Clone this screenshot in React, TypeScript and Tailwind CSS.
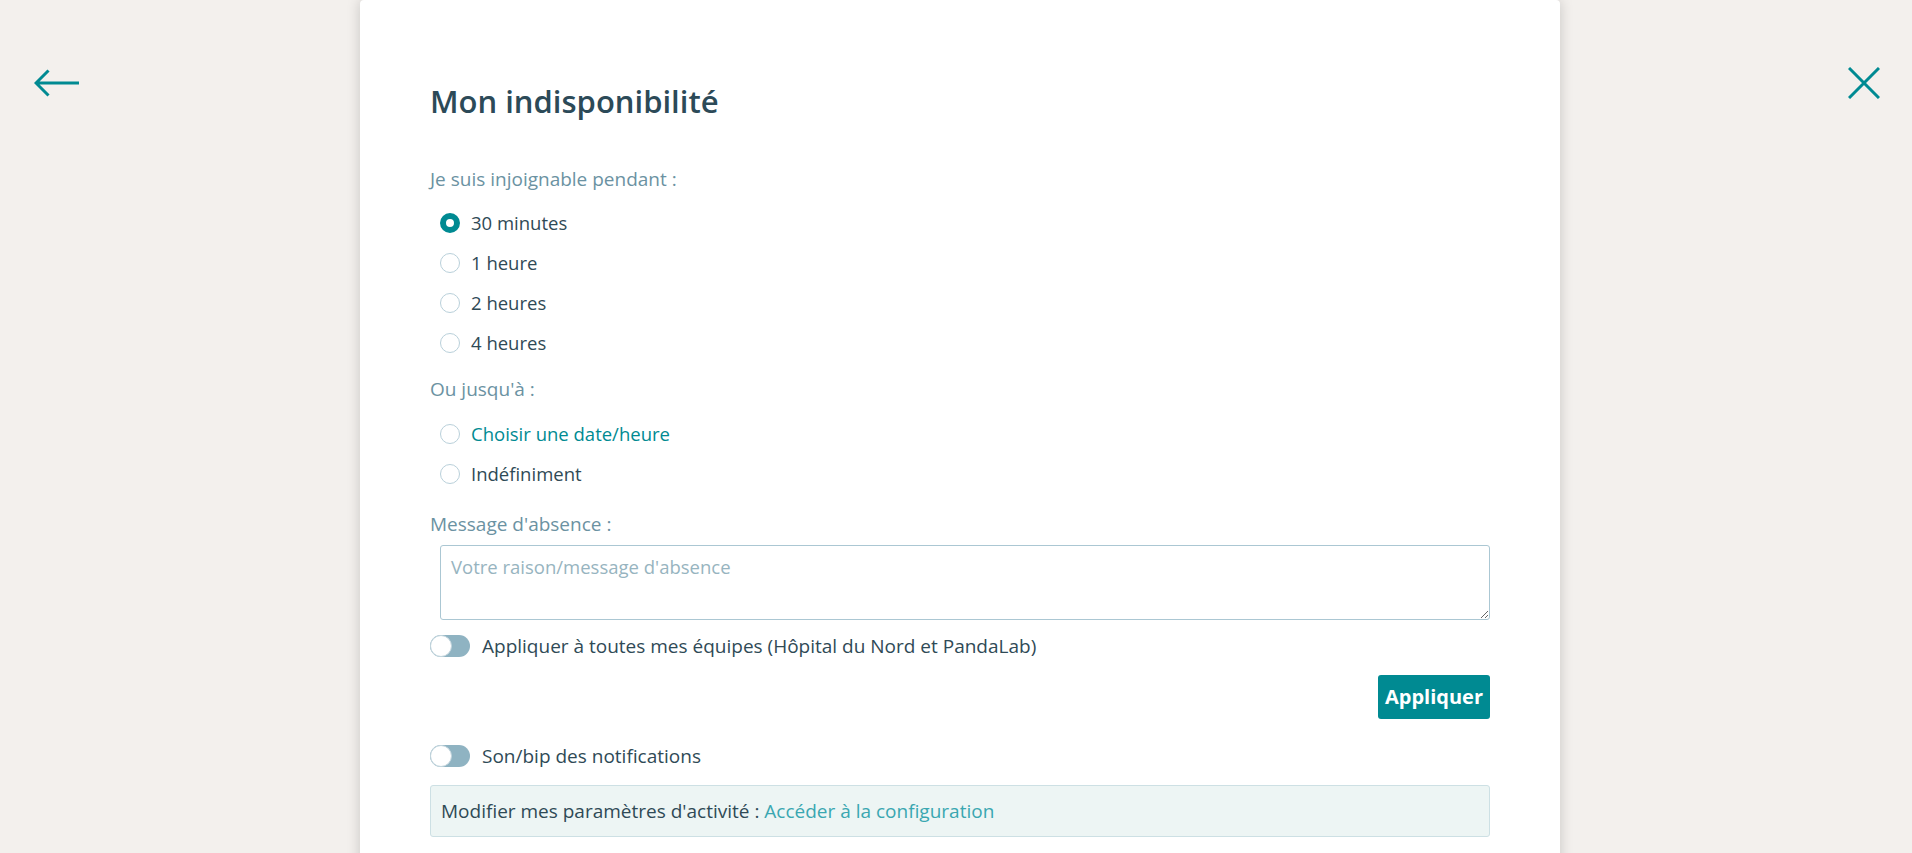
import React from "react";

const FONT = { fontFamily: '"Open Sans", "Noto Sans", sans-serif' };

function Radio({ checked, label, link }: { checked?: boolean; label: string; link?: boolean }) {
  return (
    <div className="flex h-[40px] items-center pl-[10px]">
      {checked ? (
        <span className="box-border h-[20px] w-[20px] shrink-0 rounded-full border-[6px] border-[#008a92] bg-white" />
      ) : (
        <span className="box-border h-[20px] w-[20px] shrink-0 rounded-full border border-[#b9d0da] bg-white" />
      )}
      <span className={`ml-[11px] text-[18.5px] ${link ? "text-[#008a92]" : "text-[#2f4a56]"}`}>{label}</span>
    </div>
  );
}

function Toggle({ label }: { label: string }) {
  return (
    <div className="flex h-[30px] items-center">
      <span className="relative box-border h-[22px] w-[40px] shrink-0 rounded-full bg-[#8fb3c2]">
        <span className="absolute left-0 top-0 box-border h-[22px] w-[22px] rounded-full border border-[#c3d5dd] bg-white" />
      </span>
      <span className="ml-[12px] text-[19px] text-[#2f4a56]">{label}</span>
    </div>
  );
}

export default function App() {
  return (
    <div className="flex h-[853px] w-full overflow-hidden bg-[#f3f0ed]" style={FONT}>
      <div className="w-[360px] shrink-0">
        <div className="ml-[34px] mt-[69px] h-[28px] w-[45px]">
          <svg width="45" height="28" viewBox="0 0 45 28" fill="none">
            <path d="M45 14H2.5M14.5 1.5L2 14l12.5 12.5" stroke="#008a92" strokeWidth="3" />
          </svg>
        </div>
      </div>
      <div className="h-[900px] w-[1200px] shrink-0 rounded-t-[4px] bg-white px-[70px] shadow-[0_0_14px_rgba(0,0,0,0.18)]">
        <div className="w-[1060px]">
          <h1 className="mt-[80px] h-[42px] text-[31px] font-semibold leading-[42px] text-[#2c4a58]">
            Mon indisponibilité
          </h1>
          <div className="mt-[39px] flex h-[36px] items-center text-[19px] text-[#6b92a2]">
            Je suis injoignable pendant :
          </div>
          <div className="mt-[6px]">
            <Radio checked label="30 minutes" />
            <Radio label="1 heure" />
            <Radio label="2 heures" />
            <Radio label="4 heures" />
          </div>
          <div className="mt-[8px] flex h-[36px] items-center text-[19px] text-[#6b92a2]">Ou jusqu'à :</div>
          <div className="mt-[7px]">
            <Radio link label="Choisir une date/heure" />
            <Radio label="Indéfiniment" />
          </div>
          <div className="mt-[12px] flex h-[36px] items-center text-[19px] text-[#6b92a2]">Message d'absence :</div>
          <div className="mt-[3px] pl-[10px]">
            <textarea
              className="box-border block h-[75px] w-full rounded-[3px] border border-[#abc7d3] px-[10px] py-[8px] text-[18.5px] leading-[26px] text-[#2f4a56] outline-none placeholder:text-[#97b4c0]"
              placeholder="Votre raison/message d'absence"
              style={FONT}
            />
          </div>
          <div className="mt-[11px]">
            <Toggle label="Appliquer à toutes mes équipes (Hôpital du Nord et PandaLab)" />
          </div>
          <div className="mt-[14px] flex justify-end">
            <button className="h-[44px] w-[112px] rounded-[3px] bg-[#008a92] text-[20px] font-bold text-white" style={FONT}>
              Appliquer
            </button>
          </div>
          <div className="mt-[22px]">
            <Toggle label="Son/bip des notifications" />
          </div>
          <div className="mt-[14px] box-border flex h-[52px] items-center rounded-[3px] border border-[#cde0e4] bg-[#edf5f4] px-[10px] text-[19px] text-[#2f4a56]">
            Modifier mes paramètres d'activité :&nbsp;<span className="text-[#3aa7b1]">Accéder à la configuration</span>
          </div>
        </div>
      </div>
      <div className="flex-1">
        <div className="ml-[288px] mt-[67px] h-[32px] w-[32px]">
          <svg width="32" height="32" viewBox="0 0 32 32" fill="none">
            <path d="M1 1L31 31M31 1L1 31" stroke="#008a92" strokeWidth="3" />
          </svg>
        </div>
      </div>
    </div>
  );
}
